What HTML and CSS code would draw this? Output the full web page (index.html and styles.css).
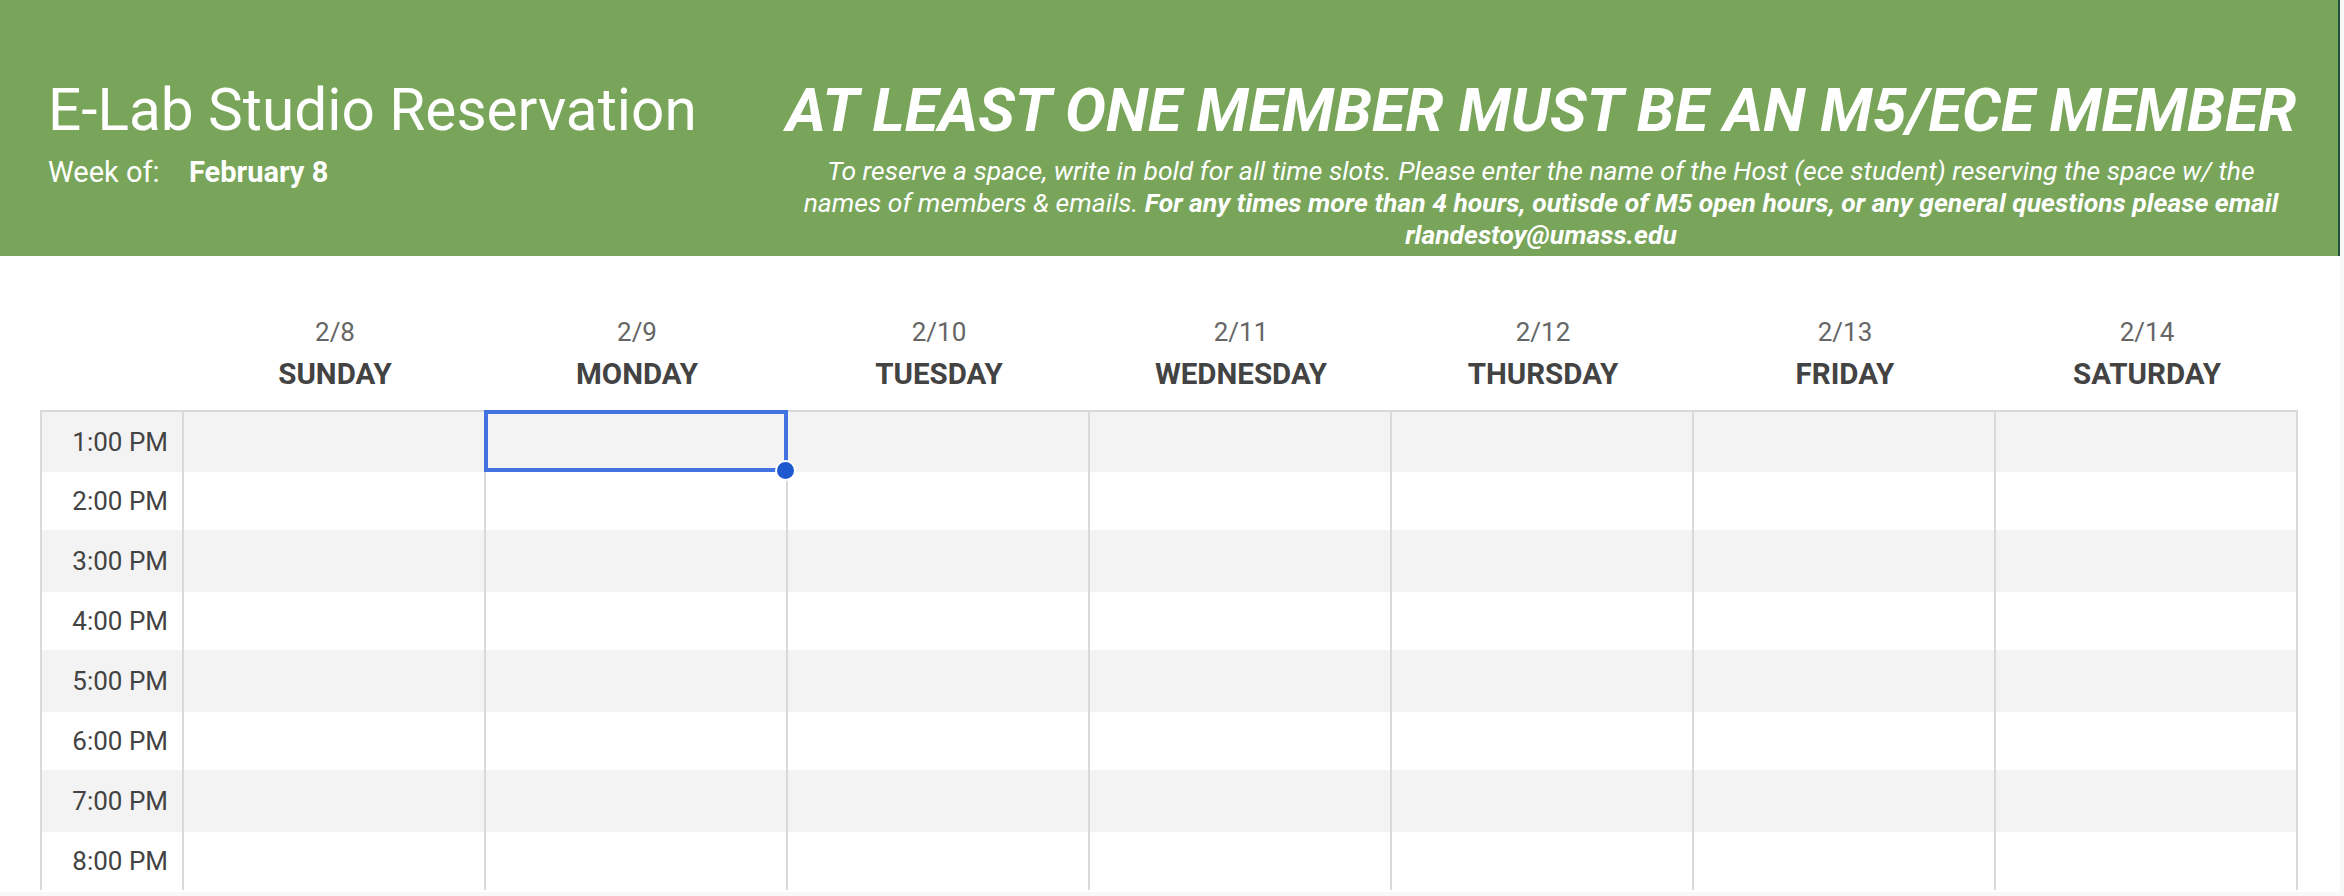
FILE: index.html
```html
<!DOCTYPE html>
<html lang="en">
<head>
<meta charset="utf-8">
<title>E-Lab Studio Reservation</title>
<link rel="stylesheet" href="styles.css">
</head>
<body>
<div class="page">
  <header class="banner">
    <div class="banner-left">
      <h1 class="title">E-Lab Studio Reservation</h1>
      <div class="week">
        <span class="week-label">Week of:</span>
        <span class="week-date">February 8</span>
      </div>
    </div>
    <div class="banner-right">
      <h2 class="notice">AT LEAST ONE MEMBER MUST BE AN M5/ECE MEMBER</h2>
      <p class="instructions">To reserve a space, write in bold for all time slots. Please enter the name of the Host (ece student) reserving the space w/ the<br>names of members &amp; emails. <strong>For any times more than 4 hours, outisde of M5 open hours, or any general questions please email<br>rlandestoy@umass.edu</strong></p>
    </div>
  </header>

  <section class="schedule">
    <div class="day-heads">
      <div class="corner"></div>
      <div class="day-head"><div class="date">2/8</div><div class="dayname">SUNDAY</div></div>
      <div class="day-head"><div class="date">2/9</div><div class="dayname">MONDAY</div></div>
      <div class="day-head"><div class="date">2/10</div><div class="dayname">TUESDAY</div></div>
      <div class="day-head"><div class="date">2/11</div><div class="dayname">WEDNESDAY</div></div>
      <div class="day-head"><div class="date">2/12</div><div class="dayname">THURSDAY</div></div>
      <div class="day-head"><div class="date">2/13</div><div class="dayname">FRIDAY</div></div>
      <div class="day-head"><div class="date">2/14</div><div class="dayname">SATURDAY</div></div>
    </div>

    <div class="grid">
      <div class="row">
        <div class="time">1:00 PM</div>
        <div class="cell"></div><div class="cell selected"></div><div class="cell"></div><div class="cell"></div><div class="cell"></div><div class="cell"></div><div class="cell"></div>
      </div>
      <div class="row">
        <div class="time">2:00 PM</div>
        <div class="cell"></div><div class="cell"></div><div class="cell"></div><div class="cell"></div><div class="cell"></div><div class="cell"></div><div class="cell"></div>
      </div>
      <div class="row">
        <div class="time">3:00 PM</div>
        <div class="cell"></div><div class="cell"></div><div class="cell"></div><div class="cell"></div><div class="cell"></div><div class="cell"></div><div class="cell"></div>
      </div>
      <div class="row">
        <div class="time">4:00 PM</div>
        <div class="cell"></div><div class="cell"></div><div class="cell"></div><div class="cell"></div><div class="cell"></div><div class="cell"></div><div class="cell"></div>
      </div>
      <div class="row">
        <div class="time">5:00 PM</div>
        <div class="cell"></div><div class="cell"></div><div class="cell"></div><div class="cell"></div><div class="cell"></div><div class="cell"></div><div class="cell"></div>
      </div>
      <div class="row">
        <div class="time">6:00 PM</div>
        <div class="cell"></div><div class="cell"></div><div class="cell"></div><div class="cell"></div><div class="cell"></div><div class="cell"></div><div class="cell"></div>
      </div>
      <div class="row">
        <div class="time">7:00 PM</div>
        <div class="cell"></div><div class="cell"></div><div class="cell"></div><div class="cell"></div><div class="cell"></div><div class="cell"></div><div class="cell"></div>
      </div>
      <div class="row">
        <div class="time">8:00 PM</div>
        <div class="cell"></div><div class="cell"></div><div class="cell"></div><div class="cell"></div><div class="cell"></div><div class="cell"></div><div class="cell"></div>
      </div>
    </div>
  </section>
</div>
</body>
</html>
```

FILE: styles.css
```css
* {
  box-sizing: border-box;
}

html, body {
  margin: 0;
  padding: 0;
}

body {
  background: #f7f8f7;
  font-family: "Roboto", "Liberation Sans", sans-serif;
  width: 2344px;
  height: 896px;
  overflow: hidden;
}

.page {
  width: 2340px;
  height: 892px;
  background: #ffffff;
  overflow: hidden;
}

/* ---------- green banner ---------- */
.banner {
  width: 2340px;
  height: 256px;
  background: #78a55a;
  border-right: 2px solid #24503d;
  display: flex;
  padding-left: 40px;
  padding-top: 76px;
  color: #ffffff;
}

.banner-left {
  width: 746px;
  flex: none;
}

.title {
  margin: 0;
  padding-left: 8px;
  font-size: 58.5px;
  font-weight: 400;
  line-height: 68px;
  white-space: nowrap;
}

.week {
  display: flex;
  margin-top: 11px;
  font-size: 29px;
  line-height: 34px;
}

.week-label {
  width: 142px;
  padding-left: 8px;
  flex: none;
}

.week-date {
  padding-left: 7px;
  font-weight: 700;
}

.banner-right {
  width: 1510px;
  flex: none;
  text-align: center;
}

.notice {
  margin: 0;
  font-size: 61.3px;
  font-weight: 700;
  font-style: italic;
  line-height: 68px;
  white-space: nowrap;
}

.instructions {
  margin: 11px 0 0;
  font-size: 26.5px;
  font-style: italic;
  line-height: 32px;
  white-space: nowrap;
}

.instructions strong {
  font-weight: 700;
}

/* ---------- schedule ---------- */
.schedule {
  padding-left: 40px;
  padding-top: 61px;
}

.day-heads {
  display: grid;
  grid-template-columns: 144px repeat(7, 302px);
  height: 93px;
}

.day-head {
  text-align: center;
}

.date {
  font-size: 26px;
  line-height: 30px;
  color: #666666;
}

.dayname {
  margin-top: 10px;
  font-size: 29.5px;
  font-weight: 700;
  line-height: 34px;
  color: #434343;
}

.grid {
  width: 2258px;
  border: 2px solid #d9d9d9;
  border-bottom: 0;
}

.row {
  display: grid;
  grid-template-columns: 140px repeat(7, 302px);
  height: 58px;
  background: #ffffff;
}

.row:nth-child(odd) {
  height: 62px;
  background: #f3f3f3;
}

.row:first-child {
  height: 60px;
}

.time {
  display: flex;
  align-items: center;
  justify-content: flex-end;
  padding-right: 14px;
  font-size: 26px;
  color: #434343;
}

.cell {
  border-left: 2px solid #d9d9d9;
}

.cell.selected {
  position: relative;
}

.cell.selected::before {
  content: "";
  position: absolute;
  top: -2px;
  left: -2px;
  right: -2px;
  bottom: 0;
  border: 4px solid #4174e0;
  z-index: 1;
}

.cell.selected::after {
  content: "";
  position: absolute;
  right: -10px;
  bottom: -9px;
  width: 17px;
  height: 17px;
  border-radius: 50%;
  background: #1f59cf;
  border: 2px solid #ffffff;
  z-index: 2;
}
```
